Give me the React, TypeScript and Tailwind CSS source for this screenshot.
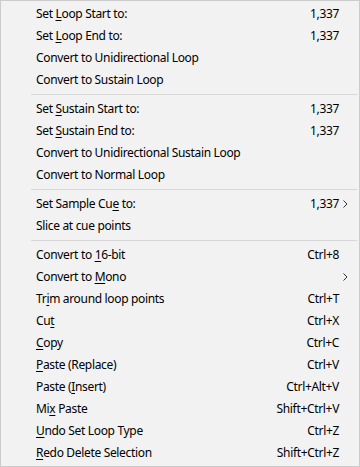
import React from "react";

type Item =
  | { sep: true }
  | { sep?: false; label: React.ReactNode; right?: string; sub?: boolean };

// underline the mnemonic letter
function U({ children }: { children: React.ReactNode }) {
  return <span className="underline decoration-1 underline-offset-[2px]">{children}</span>;
}

const ITEMS: Item[] = [
  { label: <>Set <U>L</U>oop Start to:</>, right: "1,337" },
  { label: <>Set <U>L</U>oop End to:</>, right: "1,337" },
  { label: <>Convert to Unidirectional Loop</> },
  { label: <>Convert to Sustain Loop</> },
  { sep: true },
  { label: <>Set <U>S</U>ustain Start to:</>, right: "1,337" },
  { label: <>Set <U>S</U>ustain End to:</>, right: "1,337" },
  { label: <>Convert to Unidirectional Sustain Loop</> },
  { label: <>Convert to Normal Loop</> },
  { sep: true },
  { label: <>Set Sample Cu<U>e</U> to:</>, right: "1,337", sub: true },
  { label: <>Slice at cue points</> },
  { sep: true },
  { label: <>Convert to <U>1</U>6-bit</>, right: "Ctrl+8" },
  { label: <>Convert to <U>M</U>ono</>, sub: true },
  { label: <>Tr<U>i</U>m around loop points</>, right: "Ctrl+T" },
  { label: <>Cu<U>t</U></>, right: "Ctrl+X" },
  { label: <><U>C</U>opy</>, right: "Ctrl+C" },
  { label: <><U>P</U>aste (Replace)</>, right: "Ctrl+V" },
  { label: <>Paste (<U>I</U>nsert)</>, right: "Ctrl+Alt+V" },
  { label: <>Mi<U>x</U> Paste</>, right: "Shift+Ctrl+V" },
  { label: <><U>U</U>ndo Set Loop Type</>, right: "Ctrl+Z" },
  { label: <><U>R</U>edo Delete Selection</>, right: "Shift+Ctrl+Z" },
];

function Chevron() {
  return (
    <svg width="5" height="8" viewBox="0 0 5 8" className="block">
      <path d="M0.5 0.5 L4 4 L0.5 7.5" fill="none" stroke="#333" strokeWidth="1" />
    </svg>
  );
}

export default function App() {
  return (
    <div className="h-[467px] w-[360px] border border-[#cccccc] bg-[#f2f2f2] py-[2px] text-[12px] leading-none tracking-[-0.33px] text-black [font-family:'Segoe_UI','Noto_Sans',sans-serif]">
      {ITEMS.map((it, i) =>
        it.sep ? (
          <div key={i} className="flex h-[7px] items-center pl-[30px] pr-[2px]">
            <div className="h-px w-full bg-[#d7d7d7]" />
          </div>
        ) : (
          <div key={i} className="flex h-[22px] items-center pl-[35px]">
            <span className="flex-1 whitespace-nowrap">{it.label}</span>
            {it.right && <span className="whitespace-nowrap">{it.right}</span>}
            <span className="flex w-[20px] items-center pl-[4px]">{it.sub && <Chevron />}</span>
          </div>
        )
      )}
    </div>
  );
}
